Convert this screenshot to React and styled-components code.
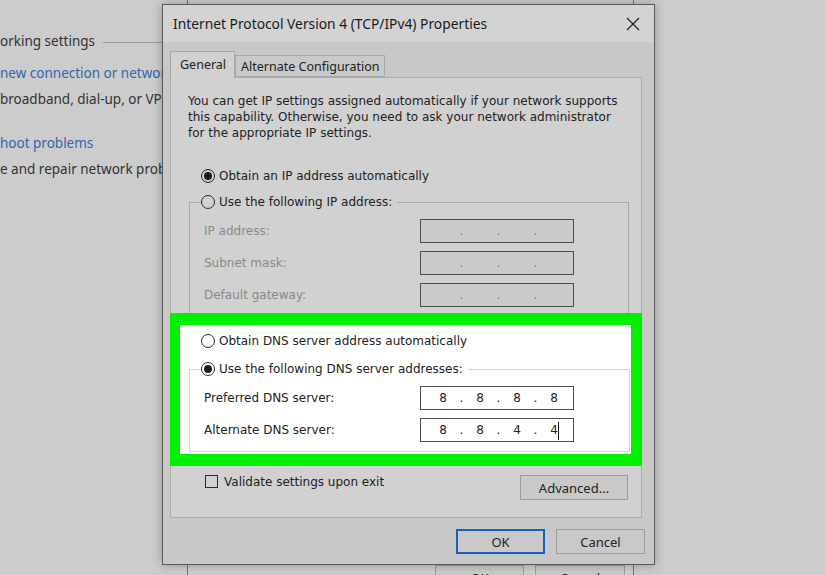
import React from "react";
import styled, { createGlobalStyle } from "styled-components";

const uiFont = `"Noto Sans", "Open Sans", sans-serif`;
const dlgFont = `"DejaVu Sans", "Liberation Sans", sans-serif`;

const GlobalStyle = createGlobalStyle`
  html, body {
    margin: 0;
    padding: 0;
    background: #cccccc;
  }
  body {
    width: 825px;
    height: 575px;
    overflow: hidden;
  }
`;

const Desktop = styled.div`
  position: relative;
  width: 825px;
  height: 575px;
  overflow: hidden;
  background: #cccccc;
`;

/* page behind everything: Network and Sharing Center, clipped by the dialog */
const SharingPage = styled.div`
  padding-top: 31px;
  width: 163px;
  overflow: hidden;
  font-family: ${uiFont};
  font-size: 13.5px;
  color: #333;
`;

const SectionHead = styled.div`
  display: flex;
  align-items: center;
  gap: 8px;
  height: 20px;
  white-space: nowrap;
  &::after {
    content: "";
    flex: 1;
    height: 1px;
    margin-top: 2px;
    background: #9a9a9a;
  }
`;

const Item = styled.div`
  margin-top: ${(p) => p.$gap}px;
  white-space: nowrap;
`;

const ItemLink = styled.div`
  line-height: 20px;
  color: #3465ae;
`;

const ItemText = styled.div`
  margin-top: 6px;
  line-height: 20px;
`;

/* window behind the dialog: only its bottom buttons show */
const BackWindow = styled.div`
  position: absolute;
  left: 187px;
  top: 0;
  width: 447px;
  height: 594px;
  box-sizing: border-box;
  border-left: 1px solid #777;
  border-right: 1px solid #777;
  background: #cdcdcd;
  display: flex;
  justify-content: flex-end;
  align-items: flex-end;
  gap: 11px;
  padding: 0 8px 4px 0;
`;

const Dialog = styled.div`
  position: absolute;
  left: 162px;
  top: 4px;
  width: 493px;
  height: 561px;
  box-sizing: border-box;
  border: 1px solid #5a5a5a;
  background: #c8c8c8;
  box-shadow: 0 0 10px rgba(0, 0, 0, 0.28);
  display: flex;
  flex-direction: column;
`;

const TitleBar = styled.div`
  height: 37px;
  flex: none;
  background: #d3d3d3;
  display: flex;
  align-items: center;
  justify-content: space-between;
  padding: 0 14px 0 10px;
`;

const Title = styled.span`
  font-family: ${uiFont};
  font-size: 13.8px;
  color: #1a1a1a;
`;

const Body = styled.div`
  flex: 1;
  display: flex;
  flex-direction: column;
  padding: 0 9px 0 7px;
`;

const TabStrip = styled.div`
  height: 35px;
  display: flex;
  align-items: flex-end;
`;

const Tab = styled.div`
  position: relative;
  z-index: ${(p) => (p.$active ? 2 : 1)};
  box-sizing: border-box;
  width: ${(p) => p.$w}px;
  height: ${(p) => (p.$active ? 27 : 22)}px;
  margin-bottom: ${(p) => (p.$active ? -1 : 0)}px;
  border: 1px solid #a8a8a8;
  border-bottom: ${(p) => (p.$active ? "none" : "1px solid #a8a8a8")};
  background: ${(p) => (p.$active ? "#d1d1d1" : "#c9c9c9")};
  font-family: ${uiFont};
  font-size: 12.5px;
  color: #222;
  display: flex;
  align-items: ${(p) => (p.$active ? "flex-start" : "center")};
  padding: ${(p) => (p.$active ? "4px 0 0 9px" : "0 0 0 5px")};
`;

const Panel = styled.div`
  margin-right: 3px;
  border: 1px solid #adadad;
  background: #d1d1d1;
  padding: 15px 12px 17px 18px;
  display: flex;
  flex-direction: column;
  font-family: ${dlgFont};
  font-size: 12px;
  color: #222;
`;

const Description = styled.p`
  margin: 0 0 0 -1px;
  line-height: 16px;
  white-space: nowrap;
`;

const RadioRow = styled.div`
  display: flex;
  align-items: center;
  gap: 4px;
  height: 18px;
  margin: ${(p) => p.$mt || 0}px 0 0 12px;
`;

const RadioCircle = styled.span`
  width: 14px;
  height: 14px;
  box-sizing: border-box;
  border: 1px solid #2a2a2a;
  border-radius: 50%;
  background: ${(p) => (p.$white ? "#fff" : "transparent")};
  display: inline-flex;
  align-items: center;
  justify-content: center;
  flex: none;
`;

const RadioDot = styled.span`
  width: 8px;
  height: 8px;
  border-radius: 50%;
  background: #1c1c1c;
`;

const GroupBox = styled.div`
  margin-top: ${(p) => p.$mt}px;
  border: 1px solid ${(p) => p.$line};
  padding-bottom: ${(p) => p.$pb}px;
`;

const Legend = styled.div`
  display: flex;
  align-items: center;
  gap: 4px;
  height: 18px;
  width: fit-content;
  margin: -10px 0 0 11px;
  padding-right: 5px;
  background: ${(p) => p.$bg};
`;

const FieldGrid = styled.div`
  display: grid;
  grid-template-columns: 216px 154px;
  row-gap: 8px;
  padding: 8px 0 0 14px;
`;

const FieldLabel = styled.span`
  display: flex;
  align-items: center;
  height: 24px;
  color: ${(p) => (p.$disabled ? "#8a8a8a" : "#222")};
`;

const IpBox = styled.div`
  box-sizing: border-box;
  height: 24px;
  border: 1px solid #4e4e4e;
  background: ${(p) => (p.$disabled ? "#cbcbcb" : "#fff")};
  display: flex;
  align-items: center;
  padding-left: 13px;
  color: ${(p) => (p.$disabled ? "#777" : "#222")};
`;

const Octet = styled.span`
  position: relative;
  width: 18px;
  text-align: center;
`;

const Dot = styled.span`
  width: 19px;
  text-align: center;
`;

const Caret = styled.span`
  position: absolute;
  top: -1px;
  left: 13px;
  width: 1px;
  height: 18px;
  background: #111;
`;

const Highlight = styled.div`
  position: relative;
  z-index: 1;
  margin: -3px -13px 0 -19px;
  border-style: solid;
  border-color: #00f000;
  border-width: 12px 11px 12px 10px;
  background: #ffffff;
  padding: 7px 1px 2px 9px;
  display: flex;
  flex-direction: column;
`;

const OptionsRow = styled.div`
  margin-top: 9px;
  display: flex;
  justify-content: space-between;
  align-items: flex-start;
`;

const CheckRow = styled.label`
  display: flex;
  align-items: center;
  gap: 6px;
  margin: 0 0 0 16px;
  height: 13px;
`;

const CheckBox = styled.span`
  width: 13px;
  height: 13px;
  box-sizing: border-box;
  border: 1px solid #2a2a2a;
  flex: none;
`;

const Button = styled.button`
  box-sizing: border-box;
  width: ${(p) => p.$w}px;
  height: 25px;
  padding: 0;
  margin-right: ${(p) => p.$mr || 0}px;
  border: ${(p) => (p.$default ? "2px solid #1761bd" : "1px solid #9c9c9c")};
  background: #c9c9c9;
  font-family: ${uiFont};
  font-size: 13px;
  color: #222;
`;

const ButtonRow = styled.div`
  margin-top: 11px;
  display: flex;
  justify-content: flex-end;
  gap: 11px;
`;

function Radio({ checked, white }) {
  return <RadioCircle $white={white}>{checked && <RadioDot />}</RadioCircle>;
}

function IpField({ value, disabled, caret }) {
  const parts = value ? value.split(".") : ["", "", "", ""];
  return (
    <IpBox $disabled={disabled}>
      {parts.map((p, i) => (
        <React.Fragment key={i}>
          <Octet>
            {p}
            {caret && i === 3 && <Caret />}
          </Octet>
          {i < 3 && <Dot>.</Dot>}
        </React.Fragment>
      ))}
    </IpBox>
  );
}

function CloseIcon() {
  return (
    <svg width="14" height="14" viewBox="0 0 14 14">
      <path d="M1 1 L13 13 M13 1 L1 13" stroke="#1a1a1a" strokeWidth="1.1" />
    </svg>
  );
}

export default function App() {
  return (
    <Desktop>
      <GlobalStyle />
      <SharingPage>
        <SectionHead>orking settings</SectionHead>
        <Item $gap={12}>
          <ItemLink>new connection or network</ItemLink>
          <ItemText>broadband, dial-up, or VPN</ItemText>
        </Item>
        <Item $gap={24}>
          <ItemLink>hoot problems</ItemLink>
          <ItemText>e and repair network problems</ItemText>
        </Item>
      </SharingPage>

      <BackWindow>
        <Button $w={89}>OK</Button>
        <Button $w={90}>Cancel</Button>
      </BackWindow>

      <Dialog>
        <TitleBar>
          <Title>Internet Protocol Version 4 (TCP/IPv4) Properties</Title>
          <CloseIcon />
        </TitleBar>
        <Body>
          <TabStrip>
            <Tab $active $w={65}>General</Tab>
            <Tab $w={150}>Alternate Configuration</Tab>
          </TabStrip>
          <Panel>
            <Description>
              You can get IP settings assigned automatically if your network supports
              <br />
              this capability. Otherwise, you need to ask your network administrator
              <br />
              for the appropriate IP settings.
            </Description>

            <RadioRow $mt={26}>
              <Radio checked />
              Obtain an IP address automatically
            </RadioRow>
            <GroupBox $mt={17} $line="#a9a9a9" $pb={8}>
              <Legend $bg="#d1d1d1">
                <Radio />
                Use the following IP address:
              </Legend>
              <FieldGrid>
                <FieldLabel $disabled>IP address:</FieldLabel>
                <IpField disabled />
                <FieldLabel $disabled>Subnet mask:</FieldLabel>
                <IpField disabled />
                <FieldLabel $disabled>Default gateway:</FieldLabel>
                <IpField disabled />
              </FieldGrid>
            </GroupBox>

            <Highlight>
              <RadioRow>
                <Radio white />
                Obtain DNS server address automatically
              </RadioRow>
              <GroupBox $mt={19} $line="#d6d6d6" $pb={9}>
                <Legend $bg="#ffffff">
                  <Radio checked white />
                  Use the following DNS server addresses:
                </Legend>
                <FieldGrid>
                  <FieldLabel>Preferred DNS server:</FieldLabel>
                  <IpField value="8.8.8.8" />
                  <FieldLabel>Alternate DNS server:</FieldLabel>
                  <IpField value="8.8.4.4" caret />
                </FieldGrid>
              </GroupBox>
            </Highlight>

            <OptionsRow>
              <CheckRow>
                <CheckBox />
                Validate settings upon exit
              </CheckRow>
              <Button $w={108} $mr={1}>Advanced...</Button>
            </OptionsRow>
          </Panel>
          <ButtonRow>
            <Button $w={89} $default>OK</Button>
            <Button $w={89}>Cancel</Button>
          </ButtonRow>
        </Body>
      </Dialog>
    </Desktop>
  );
}
